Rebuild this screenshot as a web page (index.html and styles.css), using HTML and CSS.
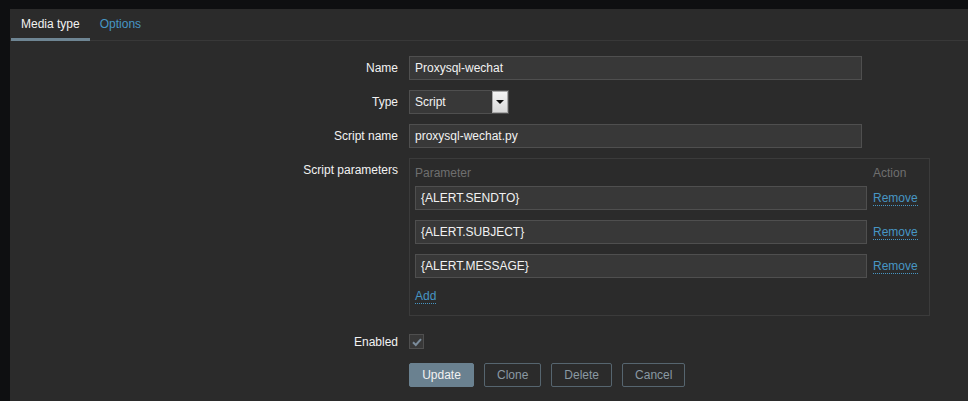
FILE: index.html
```html
<!DOCTYPE html>
<html>
<head>
<meta charset="utf-8">
<link rel="stylesheet" href="styles.css">
</head>
<body>
<div class="panel">
  <div class="tabs">
    <div class="tab active">Media type</div>
    <div class="tab link">Options</div>
  </div>
  <div class="form">
    <div class="label">Name</div>
    <div class="field"><div class="input wide">Proxysql-wechat</div></div>

    <div class="label">Type</div>
    <div class="field">
      <div class="select"><span class="sel-text">Script</span><span class="sel-btn"><span class="tri"></span></span></div>
    </div>

    <div class="label">Script name</div>
    <div class="field"><div class="input wide">proxysql-wechat.py</div></div>

    <div class="label">Script parameters</div>
    <div class="field">
      <div class="params">
        <div class="ph">Parameter</div>
        <div class="ph">Action</div>
        <div class="input">{ALERT.SENDTO}</div>
        <div class="act"><span class="dlink">Remove</span></div>
        <div class="input">{ALERT.SUBJECT}</div>
        <div class="act"><span class="dlink">Remove</span></div>
        <div class="input">{ALERT.MESSAGE}</div>
        <div class="act"><span class="dlink">Remove</span></div>
        <div class="add"><span class="dlink">Add</span></div>
      </div>
    </div>

    <div class="label enabled-label">Enabled</div>
    <div class="field enabled-field">
      <div class="checkbox">
        <svg width="12" height="10" viewBox="0 0 12 10"><path d="M2 5.2 L4.8 8 L10 2.2" fill="none" stroke="#7b8c9b" stroke-width="2"/></svg>
      </div>
    </div>

    <div class="label"></div>
    <div class="field buttons">
      <div class="btn primary">Update</div>
      <div class="btn alt">Clone</div>
      <div class="btn alt">Delete</div>
      <div class="btn alt">Cancel</div>
    </div>
  </div>
</div>
</body>
</html>
```

FILE: styles.css
```css
html, body {
  margin: 0;
  padding: 0;
  height: 100%;
}
body {
  background: #0e0f11;
  font-family: "Liberation Sans", Arial, sans-serif;
  font-size: 12px;
  color: #f2f2f2;
  overflow: hidden;
}
.panel {
  margin: 9px 0 0 10px;
  background: #2b2b2b;
  height: 392px;
}
.tabs {
  display: flex;
  height: 31px;
  border-bottom: 1px solid #383838;
  padding-left: 1px;
}
.tab {
  box-sizing: border-box;
  height: 32px;
  padding: 2px 10px 0 10px;
  line-height: 27px;
}
.tab.active {
  border-bottom: 3px solid #6e8593;
  color: #f2f2f2;
}
.tab.link {
  color: #4796c4;
}
.form {
  display: grid;
  grid-template-columns: 388px 1fr;
  column-gap: 11px;
  row-gap: 10px;
  padding-top: 15px;
}
.label {
  text-align: right;
  line-height: 24px;
  white-space: nowrap;
}
.field {
  display: flex;
  align-items: flex-start;
}
.input {
  box-sizing: border-box;
  height: 24px;
  border: 1px solid #4f4f4f;
  background: #383838;
  color: #f2f2f2;
  padding: 0 5px;
  line-height: 22px;
}
.input.wide {
  width: 453px;
}
.select {
  box-sizing: border-box;
  width: 100px;
  height: 24px;
  border: 1px solid #4f4f4f;
  background: #383838;
  display: flex;
  align-items: center;
}
.sel-text {
  flex: 1;
  padding-left: 5px;
  line-height: 22px;
}
.sel-btn {
  box-sizing: border-box;
  width: 16px;
  height: 22px;
  background: linear-gradient(#f4f4f4, #d9d9d9);
  border: 1px solid #a9a9a9;
  display: flex;
  align-items: center;
  justify-content: center;
}
.tri {
  width: 0;
  height: 0;
  border-left: 4px solid transparent;
  border-right: 4px solid transparent;
  border-top: 4px solid #111;
}
.params {
  box-sizing: border-box;
  width: 521px;
  height: 158px;
  border: 1px solid #3b3b3b;
  padding: 5px 5px 10px 5px;
  display: grid;
  grid-template-columns: 452px 50px;
  grid-auto-rows: min-content;
  column-gap: 6px;
  row-gap: 10px;
}
.ph {
  color: #6f6f6f;
  line-height: 18px;
  margin-bottom: -6px;
}
.act {
  line-height: 24px;
  white-space: nowrap;
}
.dlink {
  color: #4796c4;
  border-bottom: 1px dotted #4796c4;
}
.add {
  grid-column: 1 / 3;
  line-height: 16px;
}
.enabled-label {
  margin-top: 4px;
}
.enabled-field {
  margin-top: 4px;
  height: 24px;
  align-items: center;
}
.checkbox {
  box-sizing: border-box;
  width: 15px;
  height: 15px;
  border: 1px solid #4f4f4f;
  background: #383838;
  display: flex;
  align-items: center;
  justify-content: center;
  margin-top: -1px;
}
.buttons {
  gap: 10px;
  margin-top: -1px;
}
.btn {
  box-sizing: border-box;
  height: 24px;
  line-height: 22px;
  border: 1px solid transparent;
  text-align: center;
  border-radius: 2px;
}
.btn.primary {
  background: #6a8190;
  border-color: #6a8190;
  color: #f2f2f2;
  width: 65px;
}
.btn.alt {
  border-color: #56656f;
  color: #8a99a3;
  padding: 0 12px;
}
```
